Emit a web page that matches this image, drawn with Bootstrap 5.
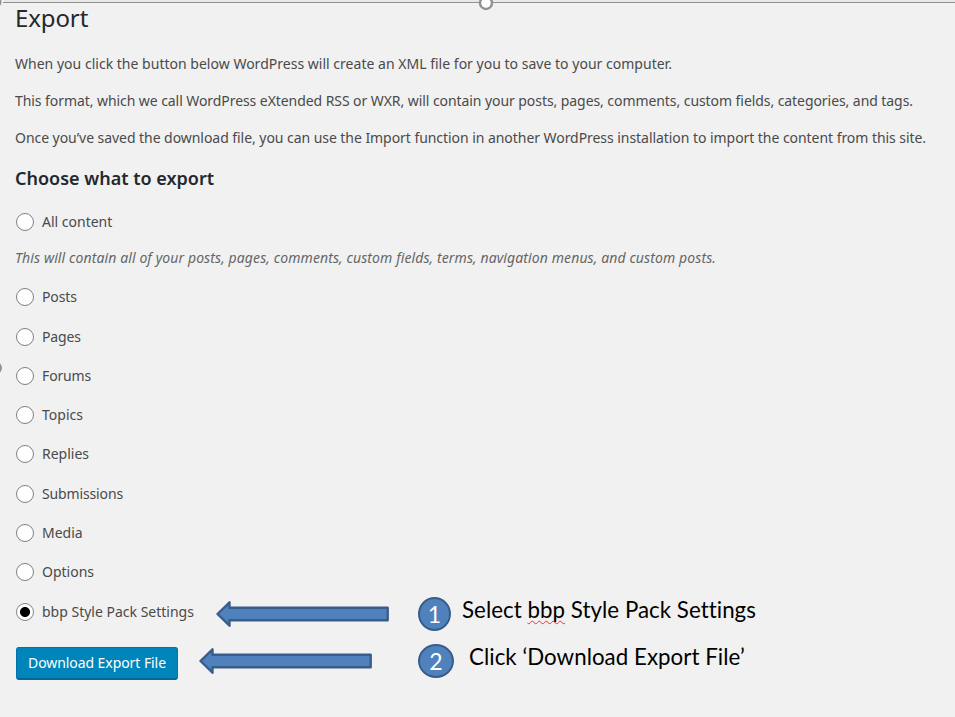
<!DOCTYPE html>
<html lang="en">
<head>
<meta charset="utf-8">
<title>Export</title>
<link href="https://cdn.jsdelivr.net/npm/bootstrap@5.3.0/dist/css/bootstrap.min.css" rel="stylesheet">
<style>
body{background:#f1f1f1;color:#4a4a4a;font:14px/20px "Noto Sans",sans-serif;width:955px;height:717px;overflow:hidden;position:relative}
.page{padding:3px 0 0 15px}
h1{font-size:24px;line-height:30px;color:#23282d;font-weight:400;letter-spacing:-.12px;margin:0 0 21px}
.intro{height:20px;margin-bottom:17px;white-space:nowrap}
.intro-1{letter-spacing:.016px}
.intro-2{letter-spacing:-.069px}
.intro-3{letter-spacing:-.052px}
h2{font-size:18px;line-height:24px;color:#23282d;font-weight:600;margin:0 0 12px;padding-top:1px}
.desc{font-style:italic;color:#666;letter-spacing:.103px;white-space:nowrap;margin:7px 0 9.2px}
.opt{height:39.33px;white-space:nowrap}
.tight{letter-spacing:-.14px}
.dot{appearance:none;width:18px;height:18px;margin:0 8px 0 1px;border:1.4px solid #808080;border-radius:50%;background:#fff;flex:none}
.dot:checked{background:radial-gradient(circle,#000 4.6px,#fff 5.4px);border-color:#84888b}
.dl{width:162px;height:33px;margin:5px 21px 0 1px;padding:0;background:#0085ba;border:1px solid #0073aa;border-bottom:2px solid #006799;border-radius:3px;color:#fff;font-size:14px;line-height:30px;letter-spacing:-.07px;white-space:nowrap}
.dl:hover{background:#0085ba;color:#fff}
.choice{width:201px}
.action{height:34px;margin-top:12.8px}
.arrow{flex:none;display:block}
.note{font-family:Lato,sans-serif;font-size:22.3px;line-height:28px;color:#000;white-space:nowrap;font-variant-ligatures:none;letter-spacing:.04px}
.note-1{margin:-4px 0 0 11px}
.note-2{margin:-9px 0 0 15px}
.num{height:34px;width:33px;border:2.5px solid #385d8a;border-radius:50%;background:#4f81bd;color:#fff;font:23px/30px Lato,sans-serif;text-align:center;flex:none}
.num.wide{width:36px}
.gap-num{margin-left:29px}
.gap-num-wide{margin-left:46px}
.spell{text-decoration:underline wavy #e33 1px;text-underline-offset:2px;text-decoration-skip-ink:none}
.frame{position:absolute;left:0;top:0}
</style>
<script src="https://cdn.jsdelivr.net/npm/bootstrap@5.3.0/dist/js/bootstrap.bundle.min.js"></script>
</head>
<body>
<svg class="frame" width="955" height="380"><path d="M4 0H955V2H4z" fill="#e8e8e8"/><path d="M3 2.5H955" stroke="#919191"/><circle cx="486" cy="3" r="6" fill="#fff" stroke="#919191" stroke-width="2.4"/><circle cx="-4" cy="2" r="5.5" fill="#919191"/><circle cx="-4" cy="368" r="6" fill="#919191"/></svg>
<main class="page">
<h1>Export</h1>
<p class="intro intro-1">When you click the button below WordPress will create an XML file for you to save to your computer.</p>
<p class="intro intro-2">This format, which we call WordPress eXtended RSS or WXR, will contain your posts, pages, comments, custom fields, categories, and tags.</p>
<p class="intro intro-3">Once you’ve saved the download file, you can use the Import function in another WordPress installation to import the content from this site.</p>
<h2>Choose what to export</h2>
<label class="opt d-flex align-items-center"><input type="radio" name="content" class="dot">All content</label>
<p class="desc">This will contain all of your posts, pages, comments, custom fields, terms, navigation menus, and custom posts.</p>
<label class="opt tight d-flex align-items-center"><input type="radio" name="content" class="dot">Posts</label>
<label class="opt tight d-flex align-items-center"><input type="radio" name="content" class="dot">Pages</label>
<label class="opt tight d-flex align-items-center"><input type="radio" name="content" class="dot">Forums</label>
<label class="opt d-flex align-items-center"><input type="radio" name="content" class="dot">Topics</label>
<label class="opt d-flex align-items-center"><input type="radio" name="content" class="dot">Replies</label>
<label class="opt tight d-flex align-items-center"><input type="radio" name="content" class="dot">Submissions</label>
<label class="opt d-flex align-items-center"><input type="radio" name="content" class="dot">Media</label>
<label class="opt d-flex align-items-center"><input type="radio" name="content" class="dot">Options</label>
<div class="opt d-flex align-items-center">
<label class="choice d-flex align-items-center"><input type="radio" name="content" class="dot" checked>bbp Style Pack Settings</label>
<svg class="arrow mt-1" width="173" height="28"><path d="M1.5 14L13.5 2.3V7.8H171.7V20.2H13.5V25.7Z" fill="#4f81bd" stroke="#385d8a" stroke-width="2.4" stroke-linejoin="round"/></svg>
<div class="num gap-num mt-1">1</div>
<div class="note note-1">Select <span class="spell">bbp</span> Style Pack Settings</div>
</div>
<div class="action d-flex align-items-center">
<button class="btn dl">Download Export File</button>
<svg class="arrow" width="173" height="28"><path d="M1.5 14L13.5 2.3V7.8H171.7V20.2H13.5V25.7Z" fill="#4f81bd" stroke="#385d8a" stroke-width="2.4" stroke-linejoin="round"/></svg>
<div class="num wide gap-num-wide">2</div>
<div class="note note-2">Click ‘Download Export File’</div>
</div>
</main>
</body>
</html>
